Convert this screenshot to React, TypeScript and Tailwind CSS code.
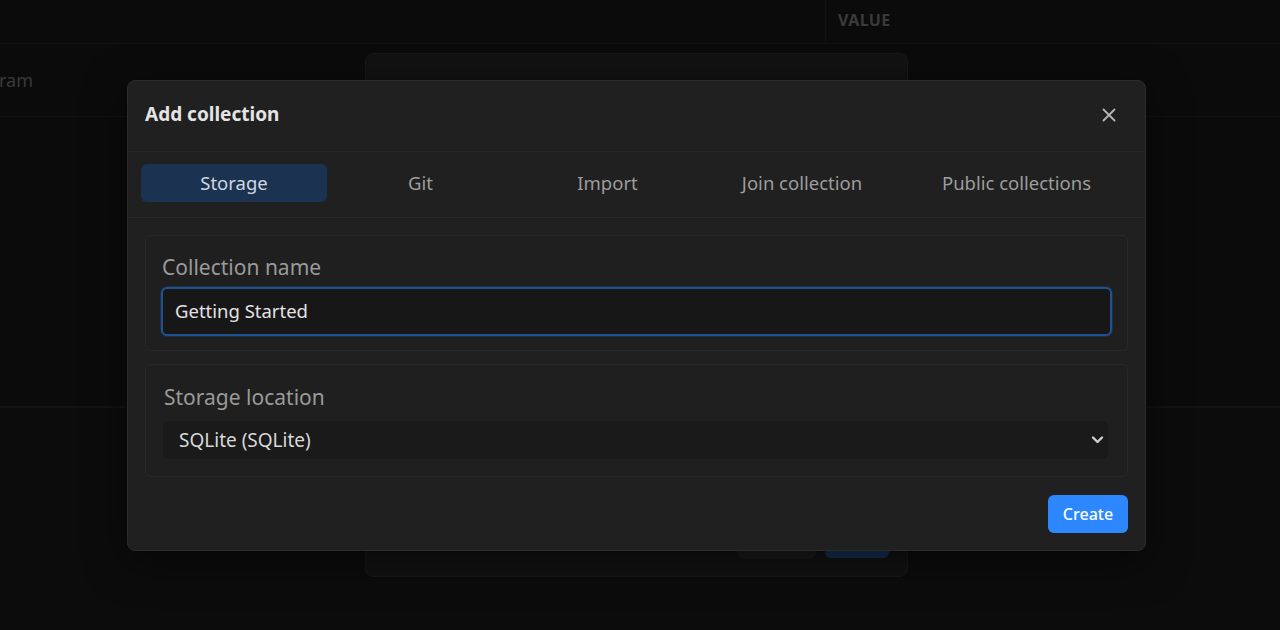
import { X } from 'lucide-react';

const TABS = [
  { label: 'Storage', w: 'w-[186px]' },
  { label: 'Git', w: 'w-[187px]' },
  { label: 'Import', w: 'w-[187px]' },
  { label: 'Join collection', w: 'w-[202px]' },
  { label: 'Public collections', w: 'w-[227px]' },
];

function BackdropPage() {
  return (
    <div className="h-[630px] w-full bg-[#0b0b0b] flex flex-col">
      {/* table header */}
      <div className="h-[44px] flex border-b border-[#111111]">
        <div className="w-[826px] border-r border-[#111111]" />
        <div className="pl-[12px] pt-[8px] text-[16px] font-bold tracking-wide text-[#3a3a3a]">VALUE</div>
      </div>
      <div className="h-[73px] flex items-center border-b border-[#111111] text-[18px] text-[#3a3a3a]">
        <span className="-ml-[1px]">ram</span>
      </div>
      <div className="h-[291px] border-b-2 border-[#131313]" />
      <div className="flex-1 bg-[#0c0c0c]" />
    </div>
  );
}

function BehindDialog() {
  return (
    <div className="absolute left-[365px] top-[53px] w-[543px] h-[524px] rounded-lg bg-[#121212] border border-[#181818] flex flex-col justify-end">
      <div className="flex justify-end gap-[9px] px-[18px] pb-[18px]">
        <div className="w-[78px] h-[24px] rounded-md bg-[#191919] border border-[#1e1e1e]" />
        <div className="w-[64px] h-[24px] rounded-md bg-[#142e4d]" />
      </div>
    </div>
  );
}

function Field({ label, children, className }: { label: string; children: React.ReactNode; className: string }) {
  return (
    <div className={`rounded-md border border-[#292929] bg-[#1f1f1f] ${className}`}>
      <div className="pl-[1px] text-[21px] leading-[28px] text-[#9a9a9a]">{label}</div>
      {children}
    </div>
  );
}

export default function App() {
  return (
    <div className="relative h-[630px] w-[1280px] overflow-hidden" style={{ fontFamily: '"Noto Sans", "Open Sans", sans-serif' }}>
      <BackdropPage />
      <BehindDialog />

      <div className="absolute left-[127px] top-[80px] w-[1019px] h-[471px] rounded-lg bg-[#202020] border border-[#2b2b2b] shadow-[0_10px_40px_rgba(0,0,0,0.5)] flex flex-col">
        <div className="h-[71px] flex items-center justify-between pl-[17px] pr-[25px] border-b border-[#282828]">
          <h2 className="-mt-[3px] text-[19px] font-bold text-[#e4e4e4]">Add collection</h2>
          <button className="-mt-[2px] w-[22px] h-[22px] flex items-center justify-center text-[#b4b4b4]">
            <X size={22} strokeWidth={2} />
          </button>
        </div>

        <div className="h-[66px] flex items-start pt-[12px] px-[13px] border-b border-[#282828]">
          {TABS.map((t, i) => (
            <button
              key={t.label}
              className={`${t.w} h-[38px] rounded-md text-[18.5px] whitespace-nowrap flex items-center justify-center ${
                i === 0 ? 'bg-[#1b3350] text-[#cfd7e0]' : 'text-[#9d9d9d]'
              }`}
            >
              {t.label}
            </button>
          ))}
        </div>

        <div className="flex flex-col gap-[13px] px-[17px] pt-[17px]">
          <Field label="Collection name" className="pt-[17px] pb-[14px] px-[15px]">
            <div className="mt-[6px] h-[49px] rounded-md border-2 border-[#1f5290] bg-[#171717] flex items-center pl-[12px] pb-[2px] text-[18.5px] text-[#e2e2e2] shadow-[0_0_0_1px_rgba(31,82,144,0.25)]">
              Getting Started
            </div>
          </Field>
          <Field label="Storage location" className="pt-[18px] pb-[17px] pl-[17px] pr-[19px]">
            <div className="relative mt-[10px]">
              <select className="w-full h-[38px] rounded-md bg-[#1a1a1a] appearance-none pl-[16px] text-[19px] text-[#d8d8d8] outline-none">
                <option>SQLite (SQLite)</option>
              </select>
              <svg className="absolute right-[4px] top-[14px]" width="13" height="10" viewBox="0 0 13 10" fill="none">
                <path d="M2 2.5 L6.5 7 L11 2.5" stroke="#cfcfcf" strokeWidth="2.4" strokeLinecap="round" strokeLinejoin="round" />
              </svg>
            </div>
          </Field>
        </div>

        <div className="flex justify-end px-[17px] pt-[18px]">
          <button className="w-[80px] h-[38px] rounded-md bg-[#2d87ff] text-white text-[16px] font-medium">Create</button>
        </div>
      </div>
    </div>
  );
}
